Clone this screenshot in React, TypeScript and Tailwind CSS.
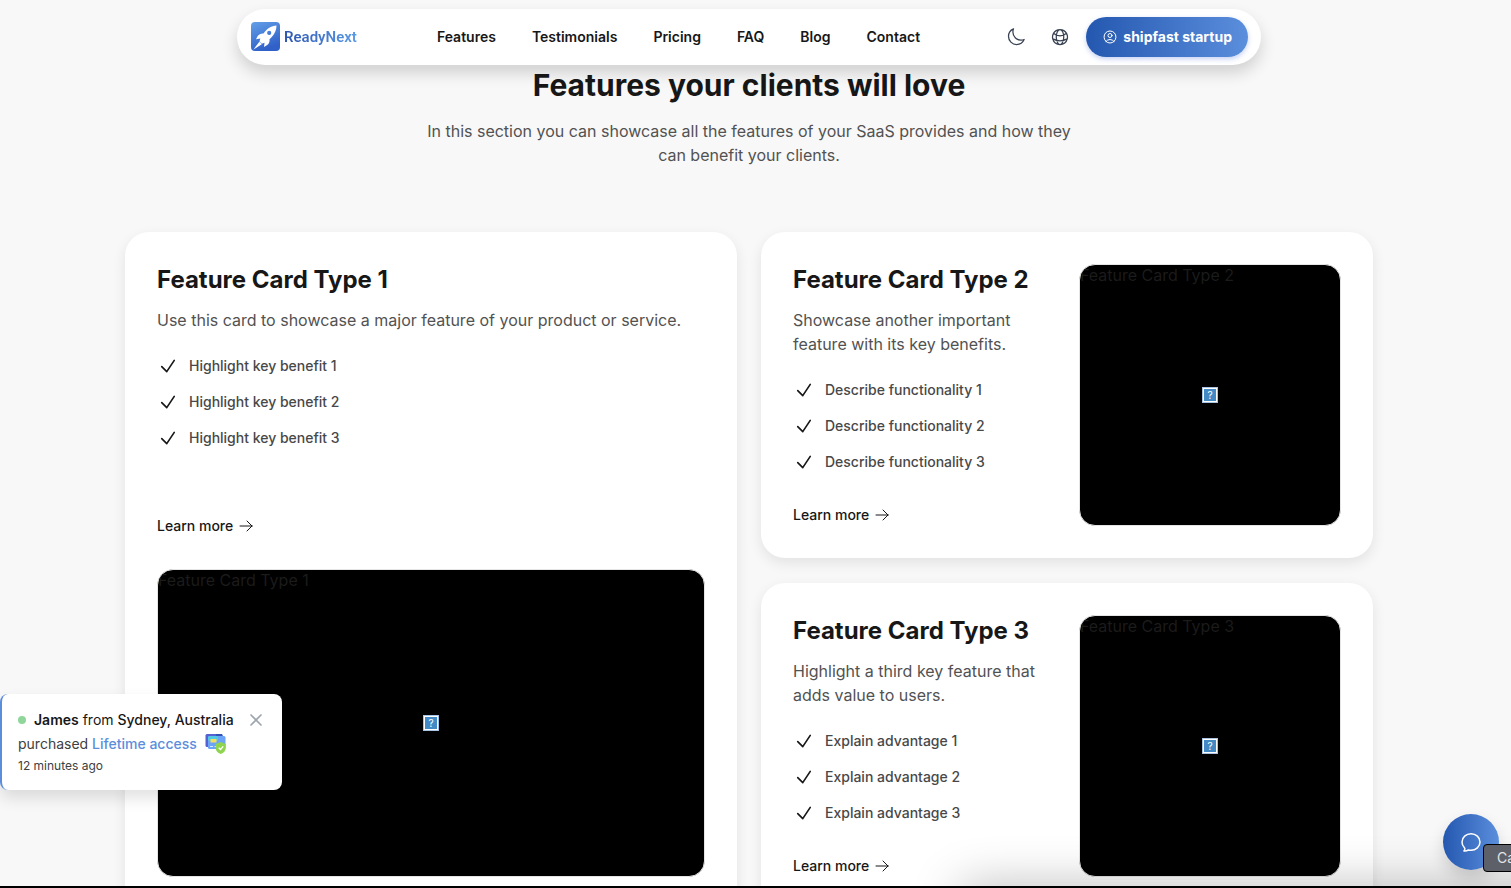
import React from "react";
import {
  HiOutlineArrowRight,
  HiOutlineChatBubbleOvalLeft,
  HiOutlineCheck,
  HiOutlineGlobeAlt,
  HiOutlineMoon,
  HiOutlineUserCircle,
  HiOutlineXMark,
} from "react-icons/hi2";

const links = ["Features", "Testimonials", "Pricing", "FAQ", "Blog", "Contact"];

function Logo() {
  return (
    <a href="#home" className="flex items-center gap-[3px]">
      <svg viewBox="0 0 30 30" className="size-[30px]" aria-hidden="true">
        <defs>
          <linearGradient id="logo" x1="0" y1="0" x2="0.4" y2="1">
            <stop offset="0" stopColor="#62a0e8" />
            <stop offset="1" stopColor="#3060c8" />
          </linearGradient>
        </defs>
        <rect x="0" y="0" width="29" height="29" rx="4" fill="url(#logo)" />
        <path
          fill="#fff"
          fillRule="evenodd"
          d="M25.500 3.600C21.500 3.800 17.500 5.500 14 9.500L12.500 11.500C10 11.300 8 12.200 6.700 14L5 17.200L9.300 16.600L8.500 19.500L10.800 21.700L13.500 20.800L13 25L16.200 23C18.100 21.600 18.900 19.600 18.500 17.200L20.300 15.500C23.800 12 25.500 8 25.500 3.600ZM18.200 8.800A2.100 2.100 0 1 1 18.200 13A2.100 2.100 0 1 1 18.200 8.800Z"
        />
        <path fill="#fff" d="M8.300 19.800L10.800 22.300L2.500 27.500Z" />
      </svg>
      <span className="bg-linear-to-r from-[#2f55b0] to-[#5a9ae6] bg-clip-text font-['Roboto',sans-serif] text-[15px] font-semibold text-transparent">
        ReadyNext
      </span>
    </a>
  );
}

function Header() {
  return (
    <header className="relative z-10 mx-auto mt-[9px] grid h-14 max-w-5xl grid-cols-[1fr_auto_1fr] items-center rounded-full bg-white pr-[13px] pl-3.5 shadow-[0_8px_16px_rgba(0,0,0,0.16)]">
      <Logo />
      <nav className="-ml-[142px] flex gap-9 justify-self-center text-sm font-semibold text-[#171717]">
        {links.map((l) => (
          <a key={l} href={"#" + l.toLowerCase()}>
            {l}
          </a>
        ))}
      </nav>
      <div className="flex items-center justify-self-end">
        <button aria-label="Toggle dark mode" className="mr-6 text-[#374151]">
          <HiOutlineMoon className="size-5" />
        </button>
        <button aria-label="Change language" className="mr-4 text-[#374151]">
          <HiOutlineGlobeAlt className="size-5" />
        </button>
        <button className="flex h-10 items-center gap-[5px] rounded-full bg-linear-to-r from-[#2458b0] to-[#5b8edc] px-4 text-sm font-bold whitespace-nowrap text-white shadow-[0_2px_5px_rgba(60,100,220,0.3)]">
          <HiOutlineUserCircle className="size-4" />
          shipfast startup
        </button>
      </div>
    </header>
  );
}

function Placeholder({ label, wide = false }: { label: string; wide?: boolean }) {
  return (
    <div
      role="img"
      aria-label={label}
      className={
        "relative flex w-full items-center justify-center overflow-hidden rounded-2xl border border-[#e5e5e5] bg-black " +
        (wide ? "aspect-video" : "aspect-square")
      }
    >
      <span className="absolute top-0 left-0 text-base leading-5 text-[#1b1b1b]">{label}</span>
      <span className="flex size-4 items-center justify-center border border-[#a9c3e4] bg-white p-px">
        <span className="flex size-full items-center justify-center bg-[#4389c4] text-[10px] leading-none text-white">
          ?
        </span>
      </span>
    </div>
  );
}

type Feature = { title: string; text: string; items: string[]; wide?: boolean };

function FeatureCard({ title, text, items, wide = false }: Feature) {
  return (
    <article
      className={
        "grid rounded-3xl bg-white p-8 shadow-[0_5px_14px_rgba(0,0,0,0.09)] " +
        (wide ? "row-span-2 grid-rows-[1fr_auto] gap-8" : "grid-cols-2 gap-6")
      }
    >
      <div className="flex flex-col items-start">
        <h3 className="text-2xl font-bold whitespace-nowrap text-[#171717]">{title}</h3>
        <p className="mt-3 text-base text-[#525252]">{text}</p>
        <ul className="mt-6 flex flex-col gap-4">
          {items.map((item) => (
            <li key={item} className="flex items-center gap-2.5 text-sm font-medium text-[#484848]">
              <span className="flex w-[22px] justify-center">
                <HiOutlineCheck strokeWidth={2} className="size-5 text-[#171717]" />
              </span>
              {item}
            </li>
          ))}
        </ul>
        <a href="#more" className="mt-auto flex items-center gap-[5px] text-sm leading-[22px] font-medium text-[#171717]">
          Learn more
          <HiOutlineArrowRight className="size-4" />
        </a>
      </div>
      <Placeholder label={title} wide={wide} />
    </article>
  );
}

function PurchaseIcon() {
  return (
    <svg viewBox="0 0 22 22" className="size-[22px]" aria-hidden="true">
      <rect x="0.500" y="1" width="17" height="13" rx="1.500" fill="#5560d2" />
      <path d="M11 1H17L18 4H11Z" fill="#2e55b5" />
      <rect x="3" y="3" width="17.500" height="13" rx="1.500" fill="#6ba4f6" />
      <rect x="3" y="3" width="10" height="5" rx="1.500" fill="#52c9e2" />
      <rect x="5.500" y="6" width="6" height="3.500" rx="0.500" fill="#f6df5c" />
      <path d="M5 13.500H8M9.500 13.500H11" stroke="#d8edff" />
      <path d="M15.700 9L20.700 11V15C20.700 18 18.700 20 15.700 21C12.700 20 10.700 18 10.700 15V11Z" fill="#8fd44f" />
      <path d="M13.700 14.800L15.500 16.500L18.200 13.300" fill="none" stroke="#fff" strokeWidth="1.300" />
    </svg>
  );
}

function PurchaseToast() {
  return (
    <aside className="absolute top-[694px] left-0 z-10 w-[282px] rounded-lg border-l-2 border-[#5b8ddc] bg-white px-4 py-3.5 text-sm leading-6 text-[#404040] shadow-[0_8px_16px_rgba(0,0,0,0.12)]">
      <div className="flex items-center text-[#171717]">
        <span className="mr-2 size-2 rounded-full bg-[#8fd69b]" />
        <p className="whitespace-nowrap">
          <strong className="font-semibold">James</strong> from{" "}
          <span className="font-medium">Sydney, Australia</span>
        </p>
        <button aria-label="Dismiss" className="ml-auto text-[#9ca3af]">
          <HiOutlineXMark strokeWidth={2} className="size-5" />
        </button>
      </div>
      <p className="flex items-center">
        purchased&nbsp;<span className="mr-2 font-medium text-[#5b8ddc]">Lifetime access</span>
        <PurchaseIcon />
      </p>
      <p className="text-xs leading-5">12 minutes ago</p>
    </aside>
  );
}

export default function App() {
  return (
    <div className="relative h-screen overflow-hidden bg-[#f8f8f8] pr-[13px] font-['Inter',sans-serif] text-[#171717]">
      <div className="flow-root">
        <Header />
        <main>
          <section className="text-center">
            <h2 className="text-3xl leading-10 font-bold">Features your clients will love</h2>
            <p className="mx-auto mt-3.5 max-w-2xl text-base text-[#525252]">
              In this section you can showcase all the features of your SaaS provides and how they can benefit your
              clients.
            </p>
          </section>
          <section className="mx-auto mt-[65px] grid max-w-[1248px] grid-cols-2 gap-x-6 gap-y-[25px]">
            <FeatureCard
              wide
              title="Feature Card Type 1"
              text="Use this card to showcase a major feature of your product or service."
              items={["Highlight key benefit 1", "Highlight key benefit 2", "Highlight key benefit 3"]}
            />
            <FeatureCard
              title="Feature Card Type 2"
              text="Showcase another important feature with its key benefits."
              items={["Describe functionality 1", "Describe functionality 2", "Describe functionality 3"]}
            />
            <FeatureCard
              title="Feature Card Type 3"
              text="Highlight a third key feature that adds value to users."
              items={["Explain advantage 1", "Explain advantage 2", "Explain advantage 3"]}
            />
          </section>
        </main>
      </div>
      <PurchaseToast />
      <div className="pointer-events-none absolute right-[-60px] bottom-[-40px] h-10 w-[610px] shadow-[0_0_50px_rgba(0,0,0,0.3)]" />
      <button
        aria-label="Open chat"
        className="absolute right-3 bottom-[18px] flex size-14 items-center justify-center rounded-full bg-linear-to-r from-[#2458b0] to-[#5b8edc] text-white shadow-[0_8px_16px_rgba(0,0,0,0.15)]"
      >
        <HiOutlineChatBubbleOvalLeft className="size-6" />
      </button>
      <div className="absolute bottom-4 left-[calc(100%-28px)] flex h-7 w-20 items-center rounded-sm border border-black bg-[#5d6068] pl-[13px] text-sm text-[#e5e5e5]">
        Ca
      </div>
      <div className="absolute inset-x-0 bottom-0 h-0.5 bg-black" />
    </div>
  );
}
